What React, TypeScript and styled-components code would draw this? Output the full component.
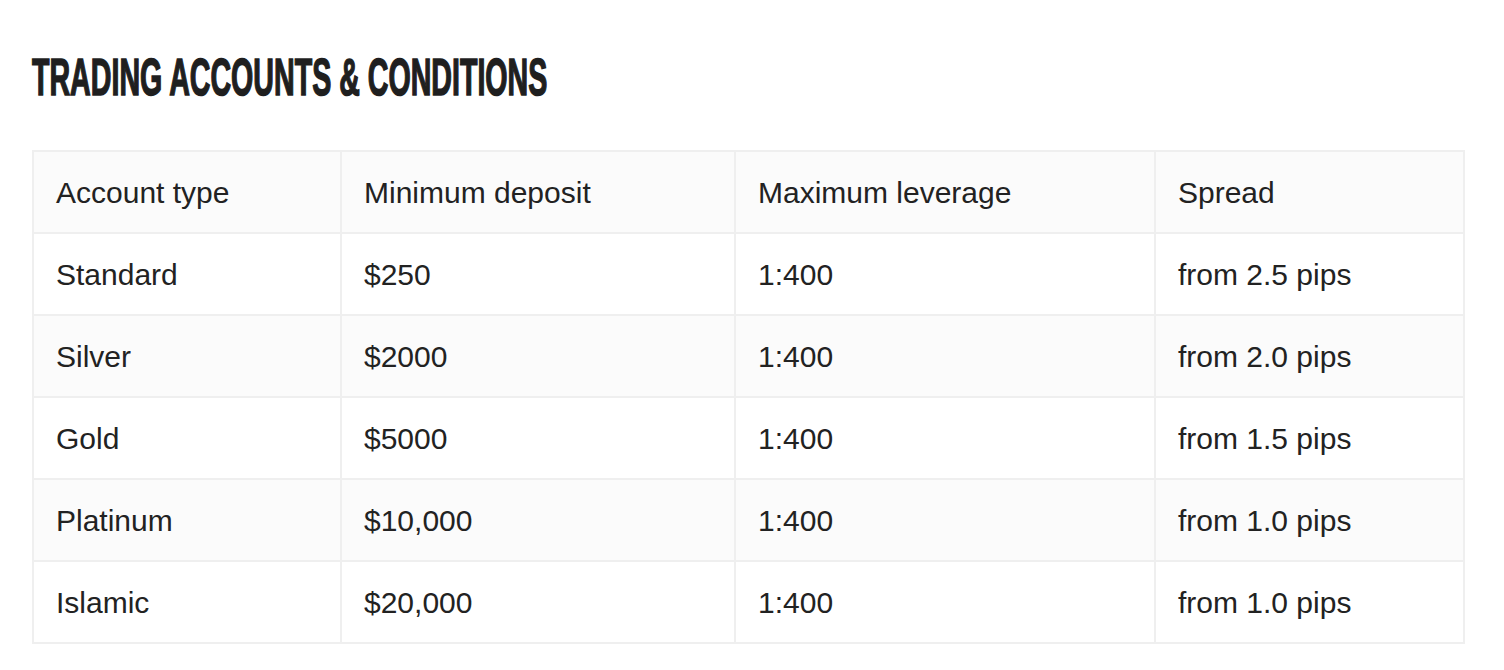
import styled, { createGlobalStyle } from 'styled-components';

const GlobalStyle = createGlobalStyle`
  body {
    margin: 0;
    background: #ffffff;
    font-family: "Liberation Sans", Arial, sans-serif;
    color: #222222;
  }
`;

const Page = styled.div`
  padding: 44px 41px 0 32px;
`;

const Heading = styled.h2`
  margin: 0 0 40px 0;
  font-family: "Liberation Sans Narrow", "Liberation Sans", sans-serif;
  font-weight: 700;
  font-size: 52px;
  line-height: 66px;
  letter-spacing: 0;
  color: #1f1f1f;
  -webkit-text-stroke: 1.6px #1f1f1f;
  text-transform: uppercase;
  transform: scaleX(0.55);
  transform-origin: left center;
  white-space: nowrap;
`;

const Table = styled.table`
  width: 1431px;
  border-collapse: collapse;
  border: 2px solid #efefef;
  table-layout: fixed;
`;

interface RowProps {
    readonly shaded: boolean;
}

const Row = styled.tr<RowProps>`
  height: 82px;
  background: ${props => (props.shaded ? '#fbfbfb' : '#ffffff')};
`;

const Cell = styled.td`
  border: 2px solid #efefef;
  padding: 2px 22px 0 22px;
  font-size: 30px;
  font-weight: 400;
  color: #222222;
  vertical-align: middle;
  text-align: left;
  white-space: nowrap;
`;

const columns = [308, 394, 420, 309];

const header = ['Account type', 'Minimum deposit', 'Maximum leverage', 'Spread'];

const accounts = [
    ['Standard', '$250', '1:400', 'from 2.5 pips'],
    ['Silver', '$2000', '1:400', 'from 2.0 pips'],
    ['Gold', '$5000', '1:400', 'from 1.5 pips'],
    ['Platinum', '$10,000', '1:400', 'from 1.0 pips'],
    ['Islamic', '$20,000', '1:400', 'from 1.0 pips'],
];

export default function App() {
    const rows = [header, ...accounts];
    return (
        <>
            <GlobalStyle />
            <Page>
                <Heading>Trading accounts &amp; conditions</Heading>
                <Table>
                    <colgroup>
                        {columns.map((w, i) => (
                            <col key={i} style={{width: w}} />
                        ))}
                    </colgroup>
                    <tbody>
                        {rows.map((row, i) => (
                            <Row key={i} shaded={i % 2 === 0}>
                                {row.map((value, j) => (
                                    <Cell key={j}>{value}</Cell>
                                ))}
                            </Row>
                        ))}
                    </tbody>
                </Table>
            </Page>
        </>
    );
}
